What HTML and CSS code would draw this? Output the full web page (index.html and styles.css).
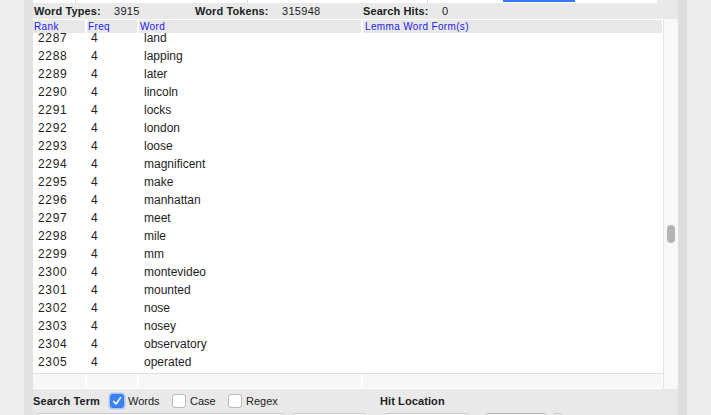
FILE: index.html
```html
<!DOCTYPE html>
<html>
<head>
<meta charset="utf-8">
<link rel="stylesheet" href="styles.css">
</head>
<body>
<div class="gutter"></div>
<div class="gutter-strip"></div>
<div class="main">
  <div class="topstrip">
    <div class="topwhite">
      <div class="seg s1"></div>
      <div class="seg s2"></div>
      <div class="seg s3"></div>
      <div class="seg s4"></div>
      <div class="bluebar"></div>
    </div>
  </div>
  <div class="stats">
    <span class="lbl w1">Word Types:</span><span class="val w2">3915</span>
    <span class="lbl w3">Word Tokens:</span><span class="val w4">315948</span>
    <span class="lbl w5">Search Hits:</span><span class="val">0</span>
  </div>
  <div class="table">
    <div class="grid">
      <div class="cols head">
        <div class="hc">Rank</div>
        <div class="hc">Freq</div>
        <div class="hc">Word</div>
        <div class="hc last">Lemma Word Form(s)</div>
      </div>
      <div class="body">
        <div class="rows">
          <div class="cols row"><span class="c-rank">2287</span><span class="c-freq">4</span><span class="c-word">land</span><span></span></div>
          <div class="cols row"><span class="c-rank">2288</span><span class="c-freq">4</span><span class="c-word">lapping</span><span></span></div>
          <div class="cols row"><span class="c-rank">2289</span><span class="c-freq">4</span><span class="c-word">later</span><span></span></div>
          <div class="cols row"><span class="c-rank">2290</span><span class="c-freq">4</span><span class="c-word">lincoln</span><span></span></div>
          <div class="cols row"><span class="c-rank">2291</span><span class="c-freq">4</span><span class="c-word">locks</span><span></span></div>
          <div class="cols row"><span class="c-rank">2292</span><span class="c-freq">4</span><span class="c-word">london</span><span></span></div>
          <div class="cols row"><span class="c-rank">2293</span><span class="c-freq">4</span><span class="c-word">loose</span><span></span></div>
          <div class="cols row"><span class="c-rank">2294</span><span class="c-freq">4</span><span class="c-word">magnificent</span><span></span></div>
          <div class="cols row"><span class="c-rank">2295</span><span class="c-freq">4</span><span class="c-word">make</span><span></span></div>
          <div class="cols row"><span class="c-rank">2296</span><span class="c-freq">4</span><span class="c-word">manhattan</span><span></span></div>
          <div class="cols row"><span class="c-rank">2297</span><span class="c-freq">4</span><span class="c-word">meet</span><span></span></div>
          <div class="cols row"><span class="c-rank">2298</span><span class="c-freq">4</span><span class="c-word">mile</span><span></span></div>
          <div class="cols row"><span class="c-rank">2299</span><span class="c-freq">4</span><span class="c-word">mm</span><span></span></div>
          <div class="cols row"><span class="c-rank">2300</span><span class="c-freq">4</span><span class="c-word">montevideo</span><span></span></div>
          <div class="cols row"><span class="c-rank">2301</span><span class="c-freq">4</span><span class="c-word">mounted</span><span></span></div>
          <div class="cols row"><span class="c-rank">2302</span><span class="c-freq">4</span><span class="c-word">nose</span><span></span></div>
          <div class="cols row"><span class="c-rank">2303</span><span class="c-freq">4</span><span class="c-word">nosey</span><span></span></div>
          <div class="cols row"><span class="c-rank">2304</span><span class="c-freq">4</span><span class="c-word">observatory</span><span></span></div>
          <div class="cols row"><span class="c-rank">2305</span><span class="c-freq">4</span><span class="c-word">operated</span><span></span></div>
        </div>
      </div>
      <div class="cols foot">
        <div class="fc"></div>
        <div class="fc"></div>
        <div class="fc"></div>
        <div class="fc last"></div>
      </div>
    </div>
    <div class="scroll"><div class="thumb"></div></div>
  </div>
  <div class="search">
    <span class="st">Search Term</span>
    <label class="grp g1"><span class="cb checked"><svg width="10" height="10" viewBox="0 0 10 10"><path d="M1.6 5.4 L4 8 L8.6 1.6" fill="none" stroke="#fff" stroke-width="1.5" stroke-linecap="round" stroke-linejoin="round"/></svg></span>Words</label>
    <label class="grp g2"><span class="cb"></span>Case</label>
    <label class="grp g3"><span class="cb"></span>Regex</label>
    <span class="st">Hit Location</span>
  </div>
  <div class="inputs">
    <div class="box b1"></div>
    <div class="box b2"></div>
    <div class="box b3"></div>
    <div class="box b4"></div>
    <div class="circle"></div>
  </div>
</div>
<div class="rstrip"></div>
<div class="rgutter"></div>
</body>
</html>
```
FILE: styles.css
```css
* { box-sizing: border-box; }
html, body { margin: 0; padding: 0; }
body {
  width: 711px;
  height: 415px;
  overflow: hidden;
  display: flex;
  background: #ececec;
  font-family: "Liberation Sans", Arial, sans-serif;
  color: #1d1d1d;
}
.gutter { width: 24px; background: #eeeeee; flex: none; }
.gutter-strip { width: 9px; background: #e2e2e2; flex: none; }
.main {
  width: 645px;
  flex: none;
  display: flex;
  flex-direction: column;
  background: #e9e9e9;
}
.topstrip { height: 3px; display: flex; flex: none; }
.topwhite { width: 624px; background: #fff; display: flex; }
.seg { height: 3px; border-right: 1px solid #d6d6d6; flex: none; }
.s1 { width: 43px; }
.s2 { width: 172px; }
.s3 { width: 180px; }
.s4 { width: 75px; border-right: none; }
.bluebar { width: 72px; height: 2px; background: #3579f6; }

.stats {
  height: 16px;
  flex: none;
  display: flex;
  align-items: center;
  padding-left: 1px;
  font-size: 11px;
  line-height: 16px;
  color: #222;
}
.lbl { font-weight: bold; letter-spacing: 0.1px; }
.val { letter-spacing: 0.3px; }
.w1 { width: 80px; }
.w2 { width: 81px; }
.w3 { width: 87px; }
.w4 { width: 81px; }
.w5 { width: 79px; }

.table { height: 370px; flex: none; display: flex; }
.grid { width: 630px; background: #fff; display: flex; flex-direction: column; }
.cols { display: grid; grid-template-columns: 54px 52px 224px 1fr; }
.head { margin-top: 1px; height: 13px; }
.hc {
  background: #e8e8e8;
  margin-right: 2px;
  font-size: 10px;
  line-height: 13px;
  padding-left: 1px;
  color: #2222ee;
  letter-spacing: 0.35px;
  white-space: nowrap;
}
.hc.last { margin-right: 1px; padding-left: 2px; }
.body { height: 340px; overflow: hidden; }
.rows { margin-top: -4px; }
.row { height: 18px; line-height: 18px; font-size: 12px; color: #1e1e1e; }
.c-rank { padding-left: 5px; letter-spacing: 0.7px; }
.c-freq { padding-left: 4px; }
.c-word { padding-left: 5px; }
.foot {
  height: 16px;
  border-top: 1px solid #dedede;
  padding-bottom: 1px;
}
.fc { background: #f7f7f7; margin-right: 2px; }
.fc.last { margin-right: 1px; }
.scroll {
  width: 15px;
  background: #f8f8f8;
  border-left: 1px solid #e3e3e3;
  padding-top: 206px;
}
.thumb {
  margin-left: 3px;
  width: 8px;
  height: 18px;
  border-radius: 4px;
  background: #b4b4b4;
}

.search {
  height: 24px;
  flex: none;
  display: flex;
  align-items: center;
  font-size: 11px;
  color: #222;
}
.st { font-weight: bold; width: 77px; letter-spacing: 0.1px; white-space: nowrap; }
.grp { display: flex; align-items: center; }
.g1 { width: 62px; }
.g2 { width: 56px; }
.g3 { width: 152px; }
.cb {
  width: 14px;
  height: 14px;
  margin-right: 4px;
  border-radius: 3px;
  background: #fff;
  border: 1px solid #b9b9b9;
  display: flex;
  align-items: center;
  justify-content: center;
}
.cb.checked {
  background: #3c82f6;
  border-color: #3a7ce8;
  box-shadow: 0 0 0 1.5px rgba(90, 150, 245, 0.45);
}
.inputs { display: flex; align-items: flex-start; padding-left: 2px; flex: none; }
.box {
  height: 22px;
  background: #fff;
  border: 1px solid #c9c9c9;
  border-radius: 4px;
  flex: none;
}
.b1 { width: 251px; }
.b2 { width: 76px; margin-left: 5px; }
.b3 { width: 87px; margin-left: 16px; }
.b4 { width: 62px; margin-left: 15px; border-color: #b3b3b3; }
.circle {
  width: 17px;
  height: 17px;
  margin-left: 2px;
  border-radius: 50%;
  background: #fff;
  border: 1px solid #bdbdbd;
}
.rstrip { width: 9px; background: #dddddd; flex: none; }
.rgutter { flex: 1; background: #ececec; }
```
